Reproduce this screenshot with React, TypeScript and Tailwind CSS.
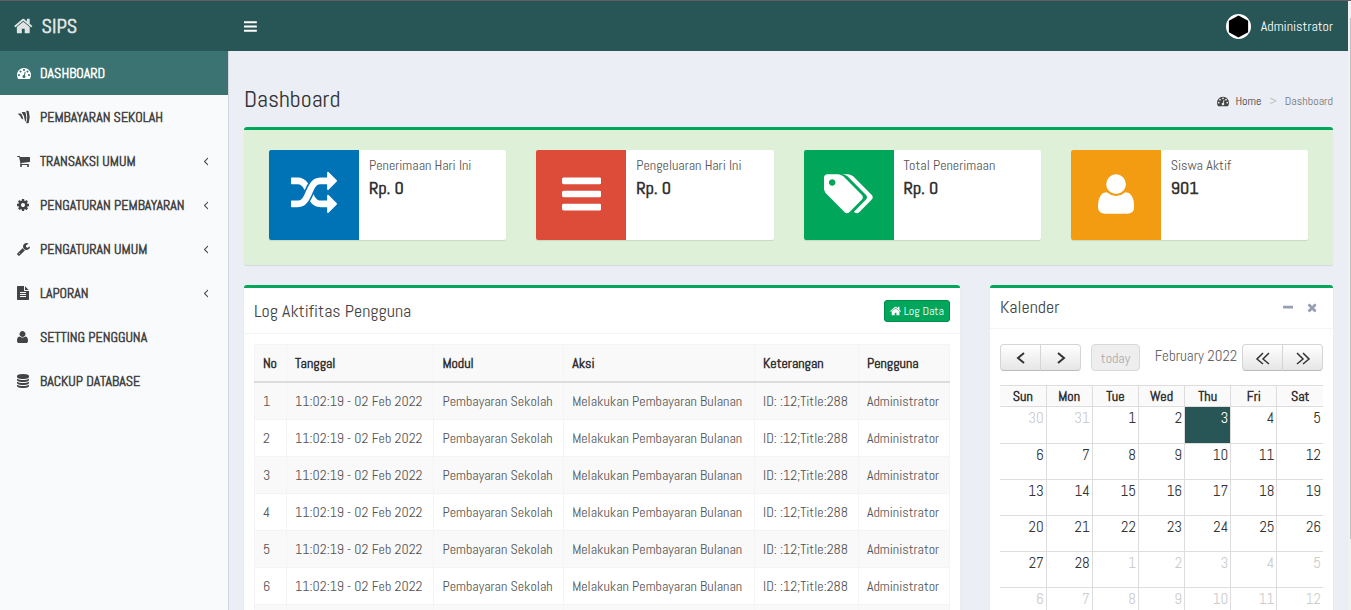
import type { ReactNode } from 'react';

// Each icon: left edge and advance width in a 1792-unit tall em, then its outline.
const icons = {
  home: ['64 0 1664 1792', 'M1472 992v480q0 26-19 45t-45 19h-384v-384h-256v384h-384q-26 0-45-19t-19-45v-480q0-1 .5-3t.5-3l575-474 575 474q1 2 1 6zm223-69l-62 74q-8 9-21 11h-3q-13 0-21-7l-692-577-692 577q-12 8-24 7-13-2-21-11l-62-74q-8-10-7-23.5t11-21.5l719-599q32-26 76-26t76 26l244 204v-195q0-14 9-23t23-9h192q14 0 23 9t9 23v408l219 182q10 8 11 21.5t-7 23.5z'],
  bars: ['128 0 1536 1792', 'M1664 1344v128q0 26-19 45t-45 19h-1408q-26 0-45-19t-19-45v-128q0-26 19-45t45-19h1408q26 0 45 19t19 45zm0-512v128q0 26-19 45t-45 19h-1408q-26 0-45-19t-19-45v-128q0-26 19-45t45-19h1408q26 0 45 19t19 45zm0-512v128q0 26-19 45t-45 19h-1408q-26 0-45-19t-19-45v-128q0-26 19-45t45-19h1408q26 0 45 19t19 45z'],
  random: ['0 0 1792 1792', 'M666 481q-60 92-137 273-22-45-37-72.5t-40.5-63.5-51-56.5-63-35-81.5-14.5h-224q-14 0-23-9t-9-23v-192q0-14 9-23t23-9h224q250 0 410 225zm1126 799q0 14-9 23l-320 320q-9 9-23 9-13 0-22.5-9.5t-9.5-22.5v-192q-32 0-85 .5t-81 1-73-1-71-5-64-10.5-63-18.5-58-28.5-59-40-55-53.5-56-69.5q59-93 136-273 22 45 37 72.5t40.5 63.5 51 56.5 63 35 81.5 14.5h256v-192q0-14 9-23t23-9q12 0 24 10l319 319q9 9 9 23zm0-896q0 14-9 23l-320 320q-9 9-23 9-13 0-22.5-9.5t-9.5-22.5v-192h-256q-48 0-87 15t-69 45-51 61.5-45 77.5q-32 62-78 171-29 66-49.5 111t-54 105-64 100-74 83-90 68.5-106.5 42-128 16.5h-224q-14 0-23-9t-9-23v-192q0-14 9-23t23-9h224q48 0 87-15t69-45 51-61.5 45-77.5q32-62 78-171 29-66 49.5-111t54-105 64-100 74-83 90-68.5 106.5-42 128-16.5h256v-192q0-14 9-23t23-9q12 0 24 10l319 319q9 9 9 23z'],
  user: ['192 0 1408 1792', 'M1600 1405q0 120-73 189.5t-194 69.5h-874q-121 0-194-69.5t-73-189.5q0-53 3.5-103.5t14-109 26.5-108.5 43-97.5 62-81 85.5-53.5 111.5-20q9 0 42 21.5t74.5 48 108 48 133.5 21.5 133.5-21.5 108-48 74.5-48 42-21.500q61 0 111.500 20t85.500 53.500 62 81 43 97.500 26.500 108.500 14 109 3.500 103.500zm-320-893q0 159-112.500 271.500t-271.500 112.500-271.500-112.500-112.500-271.500 112.500-271.500 271.500-112.500 271.500 112.500 112.500 271.500z'],
  tags: ['128 0 1920 1792', 'M576 448q0-53-37.5-90.5t-90.5-37.5-90.5 37.5-37.5 90.5 37.5 90.5 90.5 37.5 90.5-37.5 37.5-90.5zm1067 576q0 53-37 90l-491 492q-39 37-91 37-53 0-90-37l-715-716q-38-37-64.5-101t-26.5-117v-416q0-52 38-90t90-38h416q53 0 117 26.5t102 64.5l715 714q37 39 37 91zm384 0q0 53-37 90l-491 492q-39 37-91 37-36 0-59-14t-53-45l470-470q37-37 37-90 0-52-37-91l-715-714q-38-38-102-64.5t-117-26.5h224q53 0 117 26.5t102 64.5l715 714q37 39 37 91z'],
  cart: ['64 0 1664 1792', 'M704 1536q0 52-38 90t-90 38-90-38-38-90 38-90 90-38 90 38 38 90zm896 0q0 52-38 90t-90 38-90-38-38-90 38-90 90-38 90 38 38 90zm128-1088v512q0 24-16.5 42.5t-40.5 21.5l-1044 122q13 60 13 70 0 16-24 64h920q26 0 45 19t19 45-19 45-45 19h-1024q-26 0-45-19t-19-45q0-11 8-31.5t16-36 21.5-40 15.5-29.5l-177-823h-204q-26 0-45-19t-19-45 19-45 45-19h256q16 0 28.5 6.5t19.5 15.5 13 24.5 8 26 5.5 29.5 4.5 26h1201q26 0 45 19t19 45z'],
  cog: ['128 0 1536 1792', 'M1152 896q0-106-75-181t-181-75-181 75-75 181 75 181 181 75 181-75 75-181zm512-109v222q0 12-8 23t-20 13l-185 28q-19 54-39 91 35 50 107 138 10 12 10 25t-9 23q-27 37-99 108t-94 71q-12 0-26-9l-138-108q-44 23-91 38-16 136-29 186-7 28-36 28h-222q-14 0-24.5-8.5t-11.5-21.5l-28-184q-49-16-90-37l-141 107q-10 9-25 9-14 0-25-11-126-114-165-168-7-10-7-23 0-12 8-23 15-21 51-66.5t54-70.5q-27-50-41-99l-183-27q-13-2-21-12.5t-8-23.5v-222q0-12 8-23t19-13l186-28q14-46 39-92-40-57-107-138-10-12-10-24 0-10 9-23 26-36 98.5-107.5t94.5-71.5q13 0 26 10l138 107q44-23 91-38 16-136 29-186 7-28 36-28h222q14 0 24.5 8.5t11.5 21.5l28 184q49 16 90 37l142-107q9-9 24-9 13 0 25 10 129 119 165 170 7 8 7 22 0 12-8 23-15 21-51 66.5t-54 70.5q26 50 41 98l183 28q13 2 21 12.5t8 23.5z'],
  wrench: ['64 0 1664 1792', 'M448 1472q0-26-19-45t-45-19-45 19-19 45 19 45 45 19 45-19 19-45zm644-420l-682 682q-37 37-90 37-52 0-91-37l-106-108q-38-36-38-90 0-53 38-91l681-681q39 98 114.5 173.5t173.5 114.5zm634-435q0 39-23 106-47 134-164.5 217.5t-258.5 83.5q-185 0-316.5-131.5t-131.5-316.5 131.5-316.5 316.5-131.5q58 0 121.5 16.5t107.5 46.5q16 11 16 28t-16 28l-293 169v224l193 107q5-3 79-48.5t135.5-81 70.5-35.5q15 0 23.5 10t8.5 25z'],
  file: ['128 0 1536 1792', 'M1596 476q14 14 28 36h-472v-472q22 14 36 28zm-476 164h544v1056q0 40-28 68t-68 28h-1344q-40 0-68-28t-28-68v-1600q0-40 28-68t68-28h800v544q0 40 28 68t68 28zm160 736v-64q0-14-9-23t-23-9h-704q-14 0-23 9t-9 23v64q0 14 9 23t23 9h704q14 0 23-9t9-23zm0-256v-64q0-14-9-23t-23-9h-704q-14 0-23 9t-9 23v64q0 14 9 23t23 9h704q14 0 23-9t9-23zm0-256v-64q0-14-9-23t-23-9h-704q-14 0-23 9t-9 23v64q0 14 9 23t23 9h704q14 0 23-9t9-23z'],
  database: ['128 0 1536 1792', 'M896 768q237 0 443-43t325-127v170q0 69-103 128t-280 93.5-385 34.5-385-34.5-280-93.5-103-128v-170q119 84 325 127t443 43zm0 768q237 0 443-43t325-127v170q0 69-103 128t-280 93.5-385 34.5-385-34.5-280-93.5-103-128v-170q119 84 325 127t443 43zm0-384q237 0 443-43t325-127v170q0 69-103 128t-280 93.5-385 34.5-385-34.5-280-93.5-103-128v-170q119 84 325 127t443 43zm0-1152q208 0 385 34.5t280 93.5 103 128v128q0 69-103 128t-280 93.5-385 34.5-385-34.5-280-93.5-103-128v-128q0-69 103-128t280-93.5 385-34.5z'],
  dashboard: ['0 0 1792 1792', 'M384 1152q0-53-37.5-90.5t-90.5-37.5-90.5 37.5-37.5 90.5 37.5 90.5 90.5 37.5 90.5-37.5 37.5-90.5zm192-448q0-53-37.5-90.5t-90.5-37.5-90.5 37.5-37.5 90.5 37.5 90.5 90.5 37.5 90.5-37.5 37.5-90.5zm428 481l101-382q6-26-7.5-48.5t-38.5-29.5-48 6.5-30 39.5l-101 382q-60 5-107 43.5t-63 98.5q-20 77 20 146t117 89 146-20 89-117q16-60-6-117t-72-91zm660-33q0-53-37.5-90.5t-90.5-37.5-90.5 37.5-37.5 90.5 37.5 90.5 90.5 37.5 90.5-37.5 37.5-90.5zm-640-640q0-53-37.5-90.5t-90.5-37.5-90.5 37.5-37.5 90.5 37.5 90.5 90.5 37.5 90.5-37.5 37.5-90.5zm448 192q0-53-37.5-90.5t-90.5-37.5-90.5 37.5-37.5 90.5 37.5 90.5 90.5 37.5 90.5-37.5 37.5-90.5zm320 448q0 261-141 483-19 29-54 29h-1402q-35 0-54-29-141-221-141-483 0-182 71-348t191-286 286-191 348-71 348 71 286 191 191 286 71 348z'],
  wallet: ['0 0 1792 1792', 'M130 500q-10-60 50-60h240q110 0 180 130 160 290 210 700-70-130-250-190-90-370-430-580zM620 330q-20-70 50-70h290q120 0 170 180 130 520-10 1080-20-120-110-190-50-600-390-1000zM1180 150q-10-50 40-50h180q80 0 110 100 230 700 0 1390-30 100-110 100h-180q-50 0-40-50 250-740 0-1490z'],
  angle: ['606 0 576 1792', 'M1171 544q0 13-10 23l-393 393 393 393q10 10 10 23t-10 23l-50 50q-10 10-23 10t-23-10l-466-466q-10-10-10-23t10-23l466-466q10-10 23-10t23 10l50 50q10 10 10 23z'],
  minus: ['192 0 1408 1792', 'M1600 736v192q0 40-28 68t-68 28h-1216q-40 0-68-28t-28-68v-192q0-40 28-68t68-28h1216q40 0 68 28t28 68z'],
  times: ['192 0 1408 1792', 'M1490 1322q0 40-28 68l-136 136q-28 28-68 28t-68-28l-294-294-294 294q-28 28-68 28t-68-28l-136-136q-28-28-28-68t28-68l294-294-294-294q-28-28-28-68t28-68l136-136q28-28 68-28t68 28l294 294 294-294q28-28 68-28t68 28l136 136q28 28 28 68t-28 68l-294 294 294 294q28 28 28 68z'],
} as const;
type IconName = keyof typeof icons;

function Icon({ name, className = 'h-[14px]' }: { name: IconName; className?: string }) {
  return (
    <svg viewBox={icons[name][0]} fill="currentColor" aria-hidden="true" className={`w-auto shrink-0 ${className}`}>
      <path d={icons[name][1]} />
    </svg>
  );
}

const menu: { label: string; icon: IconName; active?: boolean; sub?: boolean }[] = [
  { label: 'DASHBOARD', icon: 'dashboard', active: true },
  { label: 'PEMBAYARAN SEKOLAH', icon: 'wallet' },
  { label: 'TRANSAKSI UMUM', icon: 'cart', sub: true },
  { label: 'PENGATURAN PEMBAYARAN', icon: 'cog', sub: true },
  { label: 'PENGATURAN UMUM', icon: 'wrench', sub: true },
  { label: 'LAPORAN', icon: 'file', sub: true },
  { label: 'SETTING PENGGUNA', icon: 'user' },
  { label: 'BACKUP DATABASE', icon: 'database' },
];

const stats: { label: string; value: string; icon: IconName; color: string }[] = [
  { label: 'Penerimaan Hari Ini', value: 'Rp. 0', icon: 'random', color: 'bg-[#0073b7]' },
  { label: 'Pengeluaran Hari Ini', value: 'Rp. 0', icon: 'bars', color: 'bg-[#dd4b39]' },
  { label: 'Total Penerimaan', value: 'Rp. 0', icon: 'tags', color: 'bg-[#00a65a]' },
  { label: 'Siswa Aktif', value: '901', icon: 'user', color: 'bg-[#f39c12]' },
];

const columns = ['No', 'Tanggal', 'Modul', 'Aksi', 'Keterangan', 'Pengguna'];
const logs = Array.from({ length: 10 }, (_, i) => [
  String(i + 1), '11:02:19 - 02 Feb 2022', 'Pembayaran Sekolah', 'Melakukan Pembayaran Bulanan', 'ID: :12;Title:288', 'Administrator',
]);

const days = ['Sun', 'Mon', 'Tue', 'Wed', 'Thu', 'Fri', 'Sat'];
const weeks = Array.from({ length: 6 }, (_, w) =>
  Array.from({ length: 7 }, (_, d) => {
    const date = new Date(2022, 0, 30 + w * 7 + d);
    return { n: date.getDate(), other: date.getMonth() !== 1, today: date.getMonth() === 1 && date.getDate() === 3 };
  }),
);

function Box({ children, className = 'bg-white' }: { children: ReactNode; className?: string }) {
  return <section className={`rounded-[3px] border-t-[3px] border-[#00a65a] shadow-[0_1px_1px_rgba(0,0,0,0.1)] ${className}`}>{children}</section>;
}

function CalButton({ label, d, className, stroke }: { label: string; d: string; className: string; stroke: number }) {
  return (
    <button type="button" aria-label={label} className={`flex h-[27px] w-[41px] items-center justify-center border border-[#d5d5d5] border-b-[#bbb] bg-linear-to-b from-white to-[#e6e6e6] text-[#333] ${className}`}>
      <svg viewBox="0 0 16 14" className="h-[14px] w-4" fill="none" stroke="currentColor" strokeWidth={stroke} aria-hidden="true">
        <path d={d} />
      </svg>
    </button>
  );
}

export default function App() {
  return (
    <div className="flex h-screen overflow-hidden bg-[#f1f1f1] font-['Abel','Roboto_Condensed',sans-serif] text-[14px] leading-5 text-[#333]">
      <div className="flex min-w-0 flex-1 flex-col border-t border-[#5f5f5f] bg-[#ebeef4]">
        <header className="flex h-[50px] shrink-0 items-center bg-[#285555] text-white">
          <a href="#" className="flex w-[229px] items-center gap-[9px] pl-[14px] text-[20px] font-bold text-[#dfe3e3]">
            <Icon name="home" className="h-5" />
            SIPS
          </a>
          <button type="button" aria-label="Toggle navigation" className="p-[15px]">
            <Icon name="bars" className="h-[15px]" />
          </button>
          <a href="#" className="mr-[15px] ml-auto flex items-center gap-[10px]">
            <svg viewBox="0 0 26 26" className="size-[25px]" aria-hidden="true">
              <circle cx="13" cy="13" r="13" fill="#fff" />
              <path d="M13 1.5 23 7v12l-10 5.500L3 19V7z" fill="#000" />
            </svg>
            Administrator
          </a>
        </header>
        <div className="flex min-h-0 flex-1">
          <nav className="w-[229px] shrink-0 border-r border-[#d2d6de] bg-[#f9fafc]">
            <ul>
              {menu.map((m) => (
                <li key={m.label}>
                  <a href="#" className={`flex h-11 items-center pr-5 pl-[17px] font-bold ${m.active ? 'bg-[#3a7371] text-white' : 'text-[#444]'}`}>
                    <span className="w-[23px]"><Icon name={m.icon} /></span>
                    {m.label}
                    {m.sub && <Icon name="angle" className="ml-auto h-[14px]" />}
                  </a>
                </li>
              ))}
            </ul>
          </nav>
          <main className="min-w-0 flex-1 overflow-hidden px-[15px]">
            <div className="flex items-center justify-between pt-[35px] pb-[15px]">
              <h1 className="text-[24px] leading-[26px]">Dashboard</h1>
              <ol className="flex items-center gap-2 pt-1 text-[12px]">
                <li><a href="#" className="flex items-center gap-[7px] text-[#444]"><Icon name="dashboard" className="h-3" />Home</a></li>
                <li aria-hidden="true" className="text-[#bbb]">&gt;</li>
                <li className="text-[#777]">Dashboard</li>
              </ol>
            </div>
            <Box className="bg-[#dff0d8]">
              <div className="grid grid-cols-4 gap-[30px] px-[25px] pt-5 pb-[25px]">
                {stats.map((s) => (
                  <div key={s.label} className="flex h-[90px] overflow-hidden rounded-[2px] bg-white shadow-[0_1px_1px_rgba(0,0,0,0.1)]">
                    <span className={`flex w-[90px] shrink-0 items-center justify-center pb-[3px] text-white ${s.color}`}><Icon name={s.icon} className="h-[46px]" /></span>
                    <div className="px-[10px] py-[5px]">
                      <div className="text-[#555]">{s.label}</div>
                      <div className="text-[18px] leading-[26px] font-bold">{s.value}</div>
                    </div>
                  </div>
                ))}
              </div>
            </Box>
            <div className="mt-5 grid grid-cols-3 items-start gap-[30px]">
              <div className="col-span-2">
                <Box>
                  <div className="flex items-center justify-between border-b border-[#f4f4f4] px-[10px] pt-3 pb-[11px]">
                    <h2 className="text-[18px] leading-[22px] text-[#444]">Log Aktifitas Pengguna</h2>
                    <a href="#" className="flex h-[22px] items-center gap-[3px] rounded-[3px] border border-[#008d4c] bg-[#00a65a] px-[5px] text-[12px] text-white"><Icon name="home" className="h-3" />Log Data</a>
                  </div>
                  <div className="p-[10px]">
                    <table className="w-full border-collapse text-left">
                      <thead>
                        <tr className="bg-[#f9f9f9]">
                          {columns.map((c) => <th key={c} className="border border-b-2 border-[#f4f4f4] border-b-[#ddd] p-2 font-bold">{c}</th>)}
                        </tr>
                      </thead>
                      <tbody>
                        {logs.map((r) => (
                          <tr key={r[0]} className="odd:bg-[#f9f9f9]">
                            {r.map((c, i) => <td key={i} className="border border-[#f4f4f4] p-2 whitespace-nowrap text-[#555]">{c}</td>)}
                          </tr>
                        ))}
                      </tbody>
                    </table>
                  </div>
                </Box>
              </div>
              <Box>
                <div className="flex items-center justify-between border-b border-[#f4f4f4] px-[10px] pt-[9px] pb-[11px]">
                  <h2 className="text-[18px] leading-5 text-[#444]">Kalender</h2>
                  <div className="flex gap-[14px] pr-[6px] text-[#97a0b3]">
                    <button type="button" aria-label="Collapse"><Icon name="minus" className="h-[13px]" /></button>
                    <button type="button" aria-label="Close"><Icon name="times" className="h-[13px]" /></button>
                  </div>
                </div>
                <div className="px-[10px] pt-[15px]">
                  <div className="flex items-center">
                    <CalButton label="Previous month" d="M11 2 5 7l6 5" stroke={2} className="rounded-l-[4px]" />
                    <CalButton label="Next month" d="M5 2l6 5-6 5" stroke={2} className="-ml-px rounded-r-[4px]" />
                    <button type="button" disabled className="ml-[10px] h-[27px] w-[49px] rounded-[4px] border border-[#d9d9d9] bg-[#eee] text-[#aaa]">today</button>
                    <h3 className="flex-1 pb-1 pl-[10px] text-center text-[15px] whitespace-nowrap text-[#666]">February 2022</h3>
                    <CalButton label="Previous year" d="M8 2 2 8l6 5M14 2 8 8l6 5" stroke={1.5} className="rounded-l-[4px]" />
                    <CalButton label="Next year" d="M2 2l6 6-6 5M8 2l6 6-6 5" stroke={1.5} className="-ml-px rounded-r-[4px]" />
                  </div>
                  <table className="mt-[14px] w-full table-fixed border-collapse">
                    <thead>
                      <tr className="bg-[#fafafa]">
                        {days.map((d) => <th key={d} className="h-[21px] border border-[#ddd] p-0 font-bold first:border-l-0 last:border-r-0">{d}</th>)}
                      </tr>
                    </thead>
                    <tbody>
                      {weeks.map((w, i) => (
                        <tr key={i} className="h-9 first:h-[37px]">
                          {w.map((d, j) => (
                            <td key={j} className={`border border-[#ddd] px-[2px] py-px text-right align-top text-[15px] first:border-l-0 last:border-r-0 ${d.today ? 'bg-[#285555] text-white' : d.other ? 'text-[#ccc]' : 'text-[#333]'}`}>{d.n}</td>
                          ))}
                        </tr>
                      ))}
                    </tbody>
                  </table>
                </div>
              </Box>
            </div>
          </main>
        </div>
      </div>
      <div aria-hidden="true" className="w-[3px] shrink-0 border-t border-[#5f5f5f] pt-[17px] pl-[2px]">
        <div className="h-[88%] bg-[#c1c1c1]" />
      </div>
    </div>
  );
}
